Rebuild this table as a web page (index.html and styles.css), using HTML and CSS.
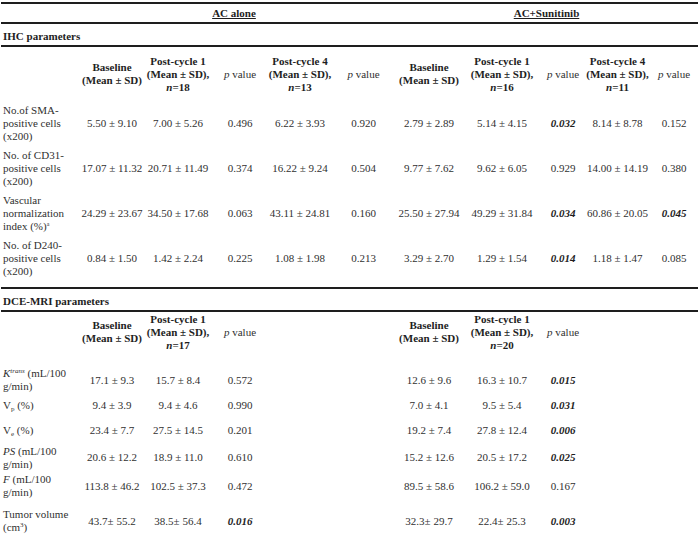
FILE: index.html
```html
<!DOCTYPE html>
<html>
<head>
<meta charset="utf-8">
<link rel="stylesheet" href="styles.css">
</head>
<body>
<table class="tbl">
  <colgroup>
    <col class="c1"><col class="c2"><col class="c3"><col class="c4"><col class="c5"><col class="c6">
    <col class="c7"><col class="c8"><col class="c9"><col class="c10"><col class="c11">
  </colgroup>
  <tr class="grp">
    <td></td>
    <td colspan="5" class="grp-ac"><span class="ul">AC alone</span></td>
    <td colspan="5" class="grp-su"><span class="ul">AC+Sunitinib</span></td>
  </tr>
  <tr class="sec">
    <td colspan="11" class="lbl">IHC parameters</td>
  </tr>
  <tr class="hdr">
    <td></td>
    <td class="h">Baseline<br>(Mean ± SD)</td>
    <td class="h">Post-cycle 1<br>(Mean ± SD),<br><i>n</i>=18</td>
    <td class="pv"><i>p</i> value</td>
    <td class="h">Post-cycle 4<br>(Mean ± SD),<br><i>n</i>=13</td>
    <td class="pv"><i>p</i> value</td>
    <td class="h">Baseline<br>(Mean ± SD)</td>
    <td class="h">Post-cycle 1<br>(Mean ± SD),<br><i>n</i>=16</td>
    <td class="pv"><i>p</i> value</td>
    <td class="h">Post-cycle 4<br>(Mean ± SD),<br><i>n</i>=11</td>
    <td class="pv"><i>p</i> value</td>
  </tr>
  <tr class="r45">
    <td class="lbl">No.of SMA-<br>positive cells<br>(x200)</td>
    <td>5.50 ± 9.10</td><td>7.00 ± 5.26</td><td>0.496</td><td>6.22 ± 3.93</td><td>0.920</td>
    <td>2.79 ± 2.89</td><td>5.14 ± 4.15</td><td class="sig">0.032</td><td>8.14 ± 8.78</td><td>0.152</td>
  </tr>
  <tr class="r45">
    <td class="lbl">No. of CD31-<br>positive cells<br>(x200)</td>
    <td>17.07 ± 11.32</td><td>20.71 ± 11.49</td><td>0.374</td><td>16.22 ± 9.24</td><td>0.504</td>
    <td>9.77 ± 7.62</td><td>9.62 ± 6.05</td><td>0.929</td><td>14.00 ± 14.19</td><td>0.380</td>
  </tr>
  <tr class="r45">
    <td class="lbl">Vascular<br>normalization<br>index (%)<sup class="fn">a</sup></td>
    <td>24.29 ± 23.67</td><td>34.50 ± 17.68</td><td>0.063</td><td>43.11 ± 24.81</td><td>0.160</td>
    <td>25.50 ± 27.94</td><td>49.29 ± 31.84</td><td class="sig">0.034</td><td>60.86 ± 20.05</td><td class="sig">0.045</td>
  </tr>
  <tr class="r45 last">
    <td class="lbl">No. of D240-<br>positive cells<br>(x200)</td>
    <td>0.84 ± 1.50</td><td>1.42 ± 2.24</td><td>0.225</td><td>1.08 ± 1.98</td><td>0.213</td>
    <td>3.29 ± 2.70</td><td>1.29 ± 1.54</td><td class="sig">0.014</td><td>1.18 ± 1.47</td><td>0.085</td>
  </tr>
  <tr class="sec">
    <td colspan="11" class="lbl">DCE-MRI parameters</td>
  </tr>
  <tr class="hdr hdr2">
    <td></td>
    <td class="h">Baseline<br>(Mean ± SD)</td>
    <td class="h">Post-cycle 1<br>(Mean ± SD),<br><i>n</i>=17</td>
    <td class="pv"><i>p</i> value</td>
    <td></td><td></td>
    <td class="h">Baseline<br>(Mean ± SD)</td>
    <td class="h">Post-cycle 1<br>(Mean ± SD),<br><i>n</i>=20</td>
    <td class="pv"><i>p</i> value</td>
    <td></td><td></td>
  </tr>
  <tr class="rk">
    <td class="lbl"><i>K</i><sup class="tr"><i>trans</i></sup> (mL/100<br>g/min)</td>
    <td>17.1 ± 9.3</td><td>15.7 ± 8.4</td><td>0.572</td><td></td><td></td>
    <td>12.6 ± 9.6</td><td>16.3 ± 10.7</td><td class="sig">0.015</td><td></td><td></td>
  </tr>
  <tr class="rvp">
    <td class="lbl">V<sub class="sb">p</sub> (%)</td>
    <td>9.4 ± 3.9</td><td>9.4 ± 4.6</td><td>0.990</td><td></td><td></td>
    <td>7.0 ± 4.1</td><td>9.5 ± 5.4</td><td class="sig">0.031</td><td></td><td></td>
  </tr>
  <tr class="rve">
    <td class="lbl">V<sub class="sb">e</sub> (%)</td>
    <td>23.4 ± 7.7</td><td>27.5 ± 14.5</td><td>0.201</td><td></td><td></td>
    <td>19.2 ± 7.4</td><td>27.8 ± 12.4</td><td class="sig">0.006</td><td></td><td></td>
  </tr>
  <tr class="rps">
    <td class="lbl"><i>PS</i> (mL/100<br>g/min)</td>
    <td>20.6 ± 12.2</td><td>18.9 ± 11.0</td><td>0.610</td><td></td><td></td>
    <td>15.2 ± 12.6</td><td>20.5 ± 17.2</td><td class="sig">0.025</td><td></td><td></td>
  </tr>
  <tr class="rf">
    <td class="lbl"><i>F</i> (mL/100<br>g/min)</td>
    <td>113.8 ± 46.2</td><td>102.5 ± 37.3</td><td>0.472</td><td></td><td></td>
    <td>89.5 ± 58.6</td><td>106.2 ± 59.0</td><td>0.167</td><td></td><td></td>
  </tr>
  <tr class="rtv">
    <td class="lbl">Tumor volume<br>(cm<sup class="cu">3</sup>)</td>
    <td>43.7± 55.2</td><td>38.5± 56.4</td><td class="sig">0.016</td><td></td><td></td>
    <td>32.3± 29.7</td><td>22.4± 25.3</td><td class="sig">0.003</td><td></td><td></td>
  </tr>
</table>
</body>
</html>
```

FILE: styles.css
```css
html, body {
  margin: 0;
  padding: 0;
  background: #ffffff;
}

body {
  font-family: "Liberation Serif", "Times New Roman", serif;
  font-size: 11px;
  line-height: 13px;
  color: #303030;
}

.tbl {
  border-collapse: collapse;
  table-layout: fixed;
  width: 697px;
  margin: 2px 0 0 1px;
  border-top: 2px solid #1e1e1e;
  border-bottom: 2px solid #1e1e1e;
}

.c1 { width: 79px; }
.c2 { width: 64px; }
.c3 { width: 68px; }
.c4 { width: 56px; }
.c5 { width: 64px; }
.c6 { width: 63px; }
.c7 { width: 68px; }
.c8 { width: 78px; }
.c9 { width: 44px; }
.c10 { width: 65px; }
.c11 { width: 48px; }

.tbl td {
  padding: 0;
  text-align: center;
  vertical-align: middle;
  white-space: nowrap;
}

.tbl td.lbl {
  text-align: left;
  padding-left: 2px;
}

.grp { height: 20px; }
.grp td {
  font-weight: bold;
  color: #1e1e1e;
  border-bottom: 2px solid #1e1e1e;
}
.grp-ac { padding-right: 7px !important; }
.ul { text-decoration: underline; }

.sec { height: 23px; }
.sec td {
  font-weight: bold;
  color: #1e1e1e;
  padding-top: 3px;
  border-top: 2px solid #1e1e1e;
  border-bottom: 2px solid #1e1e1e;
}

.hdr { height: 55px; }
.hdr2 td { padding-bottom: 14px; }
.h {
  font-weight: bold;
  color: #1e1e1e;
}
.pv { color: #303030; }

.r45 { height: 45px; }
.last td { padding-bottom: 7px; }
.last { height: 52px; }

.rk { height: 28px; }
.rvp { height: 23px; }
.rve { height: 26px; }
.rps { height: 29px; }
.rf { height: 28px; }
.rtv { height: 53px; }
.rtv td { padding-bottom: 10px; }

.sig {
  font-weight: bold;
  font-style: italic;
  color: #1e1e1e;
}

.fn {
  font-size: 6px;
  line-height: 0;
  vertical-align: 4px;
}
.tr {
  font-size: 7px;
  line-height: 0;
  vertical-align: 4px;
}
.sb {
  font-size: 7px;
  line-height: 0;
  vertical-align: -2px;
}
.cu {
  font-size: 7px;
  line-height: 0;
  vertical-align: 4px;
}
```
